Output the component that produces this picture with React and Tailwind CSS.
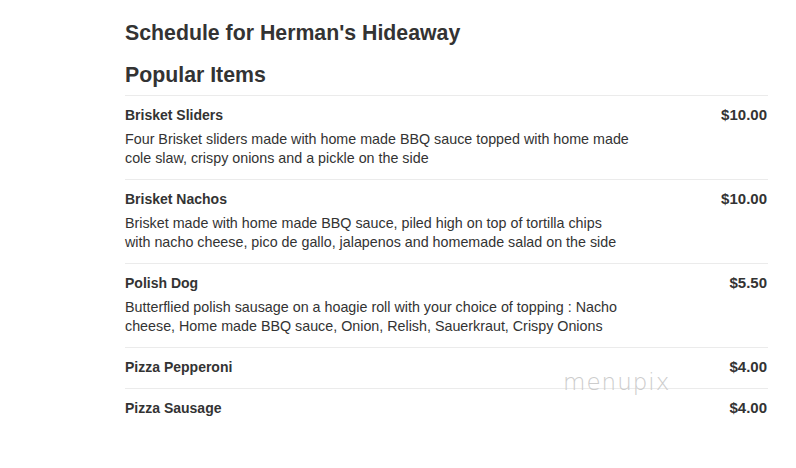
import React from "react";

const items = [
  { name: "Brisket Sliders", price: "$10.00", desc: "Four Brisket sliders made with home made BBQ sauce topped with home made cole slaw, crispy onions and a pickle on the side" },
  { name: "Brisket Nachos", price: "$10.00", desc: "Brisket made with home made BBQ sauce, piled high on top of tortilla chips with nacho cheese, pico de gallo, jalapenos and homemade salad on the side" },
  { name: "Polish Dog", price: "$5.50", desc: "Butterflied polish sausage on a hoagie roll with your choice of topping : Nacho cheese, Home made BBQ sauce, Onion, Relish, Sauerkraut, Crispy Onions" },
  { name: "Pizza Pepperoni", price: "$4.00" },
  { name: "Pizza Sausage", price: "$4.00" },
];

export default function App() {
  return (
    <div className="relative w-[796px] h-[468px] bg-white overflow-hidden text-[#333]" style={{ fontFamily: '"Liberation Sans", Arial, sans-serif' }}>
      <div className="ml-[125px] w-[643px] pt-[21px]">
        <h1 className="text-[21.3px] leading-[24px] font-bold">Schedule for Herman's Hideaway</h1>
        <h2 className="text-[21.3px] leading-[24px] font-bold mt-[18px]">Popular Items</h2>
        <div className="mt-[8px]">
          {items.map((it, i) => (
            <div key={i} className={`border-t border-[#ebebeb] pt-[10px] ${it.desc ? "pb-[11px]" : "pb-[12px]"} flex justify-between`}>
              <div>
                <div className="text-[14px] leading-[18px] font-bold">{it.name}</div>
                {it.desc && (
                  <div className="text-[14.3px] leading-[19px] mt-[6px] w-[506px]">{it.desc}</div>
                )}
              </div>
              <div className="text-[15px] leading-[18px] font-bold mr-[1px]">{it.price}</div>
            </div>
          ))}
        </div>
      </div>
      <div className="absolute left-[563px] top-[370px] text-[23px] leading-[24px] text-[#cccccc] tracking-[1px]" style={{ fontFamily: '"DejaVu Sans", sans-serif', fontWeight: 200 }}>
        menupix
      </div>
    </div>
  );
}
